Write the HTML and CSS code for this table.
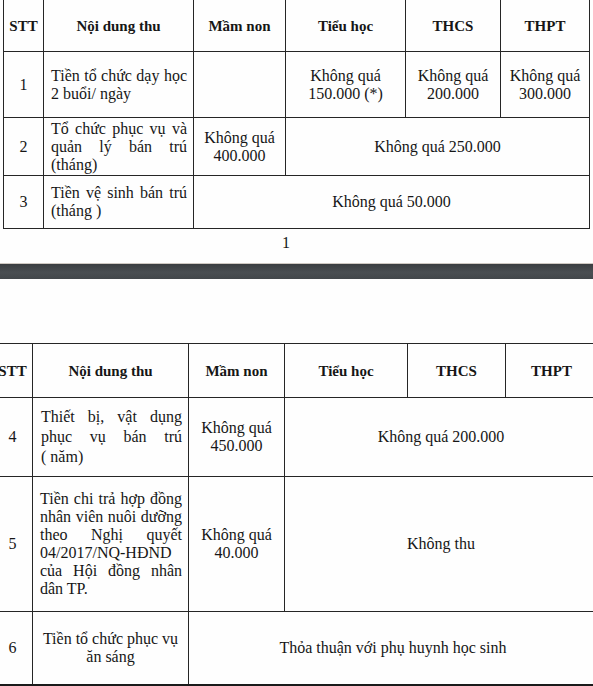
FILE: index.html
```html
<!DOCTYPE html>
<html lang="vi">
<head>
<meta charset="utf-8">
<title>Bảng thu</title>
<link rel="stylesheet" href="styles.css">
</head>
<body>
<div class="page page1">
  <table class="grid t1">
    <colgroup>
      <col class="c1a"><col class="c1b"><col class="c1c"><col class="c1d"><col class="c1e"><col class="c1f">
    </colgroup>
    <tr class="r1h">
      <th>STT</th><th>Nội dung thu</th><th>Mầm non</th><th>Tiểu học</th><th>THCS</th><th>THPT</th>
    </tr>
    <tr class="r1a">
      <td class="num">1</td>
      <td class="desc"><span class="j">Tiền tổ chức dạy học</span><span class="l">2 buổi/ ngày</span></td>
      <td></td>
      <td class="val">Không quá<br>150.000 (*)</td>
      <td class="val">Không quá<br>200.000</td>
      <td class="val">Không quá<br>300.000</td>
    </tr>
    <tr class="r1b">
      <td class="num">2</td>
      <td class="desc"><span class="j">Tổ chức phục vụ và</span><span class="j">quản lý bán trú</span><span class="l">(tháng)</span></td>
      <td class="val">Không quá<br>400.000</td>
      <td class="val" colspan="3">Không quá 250.000</td>
    </tr>
    <tr class="r1c">
      <td class="num">3</td>
      <td class="desc"><span class="j">Tiền vệ sinh bán trú</span><span class="l">(tháng )</span></td>
      <td class="val" colspan="4">Không quá 50.000</td>
    </tr>
  </table>
  <div class="pgnum">1</div>
</div>
<div class="band"></div>
<div class="page page2">
  <table class="grid t2">
    <colgroup>
      <col class="c2a"><col class="c2b"><col class="c2c"><col class="c2d"><col class="c2e"><col class="c2f">
    </colgroup>
    <tr class="r2h">
      <th>STT</th><th>Nội dung thu</th><th>Mầm non</th><th>Tiểu học</th><th>THCS</th><th>THPT</th>
    </tr>
    <tr class="r2a">
      <td class="num">4</td>
      <td class="desc"><span class="j">Thiết bị, vật dụng</span><span class="j">phục vụ bán trú</span><span class="l">( năm)</span></td>
      <td class="val">Không quá<br>450.000</td>
      <td class="val" colspan="3">Không quá 200.000</td>
    </tr>
    <tr class="r2b">
      <td class="num">5</td>
      <td class="desc"><span class="j">Tiền chi trả hợp đồng</span><span class="j">nhân viên nuôi dưỡng</span><span class="j">theo Nghị quyết</span><span class="l">04/2017/NQ-HĐND</span><span class="j">của Hội đồng nhân</span><span class="l">dân TP.</span></td>
      <td class="val">Không quá<br>40.000</td>
      <td class="val" colspan="3">Không thu</td>
    </tr>
    <tr class="r2c">
      <td class="num">6</td>
      <td class="desc center">Tiền tổ chức phục vụ<br>ăn sáng</td>
      <td class="val" colspan="4">Thỏa thuận với phụ huynh học sinh</td>
    </tr>
  </table>
</div>
</body>
</html>
```
FILE: styles.css
```css
html, body {
  margin: 0;
  padding: 0;
  background: #ffffff;
}
body {
  width: 593px;
  height: 686px;
  overflow: hidden;
  font-family: "Liberation Serif", "Times New Roman", serif;
  color: #161616;
  font-size: 16px;
  line-height: 18px;
}
.page {
  overflow: hidden;
  background: #fefefe;
}
.page1 {
  height: 263px;
}
.grid {
  border-collapse: collapse;
  table-layout: fixed;
}
.grid th,
.grid td {
  border: 1px solid #262626;
  padding: 0;
  vertical-align: middle;
  text-align: center;
}
.grid th {
  font-size: 15px;
  font-weight: bold;
}
.t1 {
  width: 586px;
  margin-top: -1px;
  margin-left: 3px;
}
.c1a { width: 40px; }
.c1b { width: 150px; }
.c1c { width: 92px; }
.c1d { width: 120px; }
.c1e { width: 95px; }
.c1f { width: 89px; }
.r1h { height: 52px; }
.r1a { height: 66px; }
.r1b { height: 58px; }
.r1c { height: 53px; }

.grid td.desc {
  text-align: left;
  padding: 0 6px 0 7px;
}
.grid td.desc.center {
  text-align: center;
  padding: 0 4px;
}
.j {
  display: block;
  text-align: justify;
  text-align-last: justify;
}
.l {
  display: block;
  text-align: left;
}
.pgnum {
  padding: 5px 0 0 282px;
  font-size: 16px;
}
.band {
  height: 15px;
  border-top: 1px solid #cfc8c2;
  background: linear-gradient(#3a3d41, #4a4e52 55%, #43474b);
}
.page2 {
  height: 408px;
  padding-top: 64px;
  box-sizing: border-box;
}
.t2 {
  width: 605px;
  margin-left: -8px;
}
.c2a { width: 40px; }
.c2b { width: 156px; }
.c2c { width: 96px; }
.c2d { width: 123px; }
.c2e { width: 98px; }
.c2f { width: 92px; }
.r2h { height: 54px; }
.r2a { height: 79px; }
.r2b { height: 135px; }
.r2c { height: 73px; }
.t2 .r2a .desc {
  padding-left: 8px;
  line-height: 20px;
}
.t2 .r2c td {
  border-bottom: 2px solid #1a1a1a;
}
```
